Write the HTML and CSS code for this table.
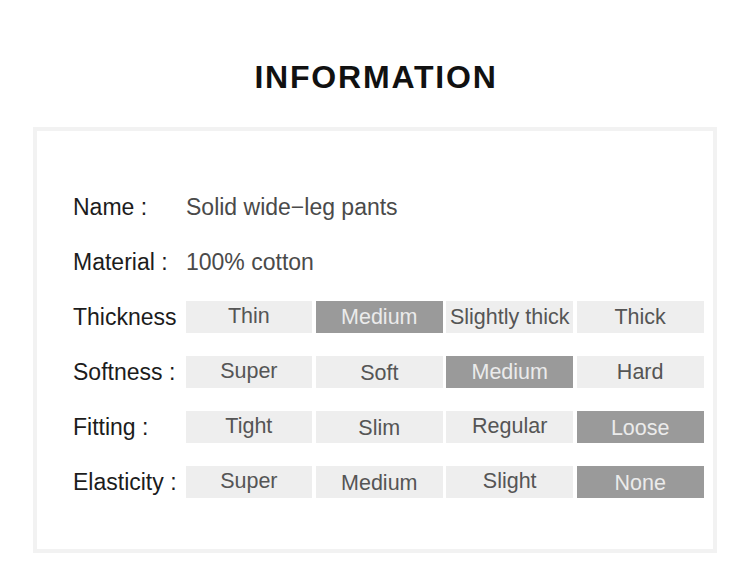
FILE: index.html
```html
<!DOCTYPE html>
<html lang="en">
<head>
<meta charset="utf-8">
<title>Information</title>
<link rel="stylesheet" href="styles.css">
</head>
<body>
<main class="page">
  <h1 class="title">INFORMATION</h1>
  <section class="card">
    <div class="row">
      <div class="label">Name :</div>
      <div class="value">Solid wide−leg pants</div>
    </div>
    <div class="row">
      <div class="label">Material :</div>
      <div class="value">100% cotton</div>
    </div>
    <div class="row">
      <div class="label">Thickness</div>
      <div class="options">
        <span class="opt up">Thin</span>
        <span class="opt on">Medium</span>
        <span class="opt">Slightly thick</span>
        <span class="opt">Thick</span>
      </div>
    </div>
    <div class="row">
      <div class="label">Softness :</div>
      <div class="options">
        <span class="opt up">Super</span>
        <span class="opt down">Soft</span>
        <span class="opt on">Medium</span>
        <span class="opt">Hard</span>
      </div>
    </div>
    <div class="row">
      <div class="label">Fitting :</div>
      <div class="options">
        <span class="opt up">Tight</span>
        <span class="opt down">Slim</span>
        <span class="opt up">Regular</span>
        <span class="opt on down">Loose</span>
      </div>
    </div>
    <div class="row">
      <div class="label">Elasticity :</div>
      <div class="options">
        <span class="opt up">Super</span>
        <span class="opt down">Medium</span>
        <span class="opt up">Slight</span>
        <span class="opt on down">None</span>
      </div>
    </div>
  </section>
</main>
</body>
</html>
```

FILE: styles.css
```css
html, body {
  margin: 0;
  padding: 0;
  background: #ffffff;
}

.page {
  width: 750px;
  height: 568px;
  font-family: "Liberation Sans", Arial, sans-serif;
  padding-top: 61px;
  box-sizing: border-box;
}

.title {
  margin: 0;
  font-size: 32px;
  line-height: 32px;
  font-weight: bold;
  letter-spacing: 1.8px;
  text-align: center;
  color: #111111;
  padding-left: 2px;
}

.card {
  box-sizing: border-box;
  margin: 34px 0 0 33px;
  width: 684px;
  height: 426px;
  border: 4px solid #f2f2f2;
  padding: 60px 0 0 36px;
  display: flex;
  flex-direction: column;
  gap: 23px;
}

.row {
  display: flex;
  align-items: center;
  height: 32px;
}

.label {
  width: 112px;
  flex: none;
  font-size: 23px;
  line-height: 32px;
  color: #1c1c1c;
  white-space: nowrap;
}

.value {
  font-size: 23px;
  line-height: 32px;
  color: #4a4a4a;
  padding-left: 1px;
}

.options {
  display: grid;
  grid-template-columns: repeat(4, 1fr);
  column-gap: 3.8px;
  width: 518px;
  margin-left: 0.5px;
}

.opt {
  height: 32px;
  background: #eeeeee;
  color: #555555;
  font-size: 21.5px;
  line-height: 32px;
  text-align: center;
  white-space: nowrap;
}

.opt.on {
  background: #9a9a9a;
  color: #ebebeb;
}

.opt.up {
  line-height: 30px;
}

.opt.down {
  line-height: 34px;
}
```
